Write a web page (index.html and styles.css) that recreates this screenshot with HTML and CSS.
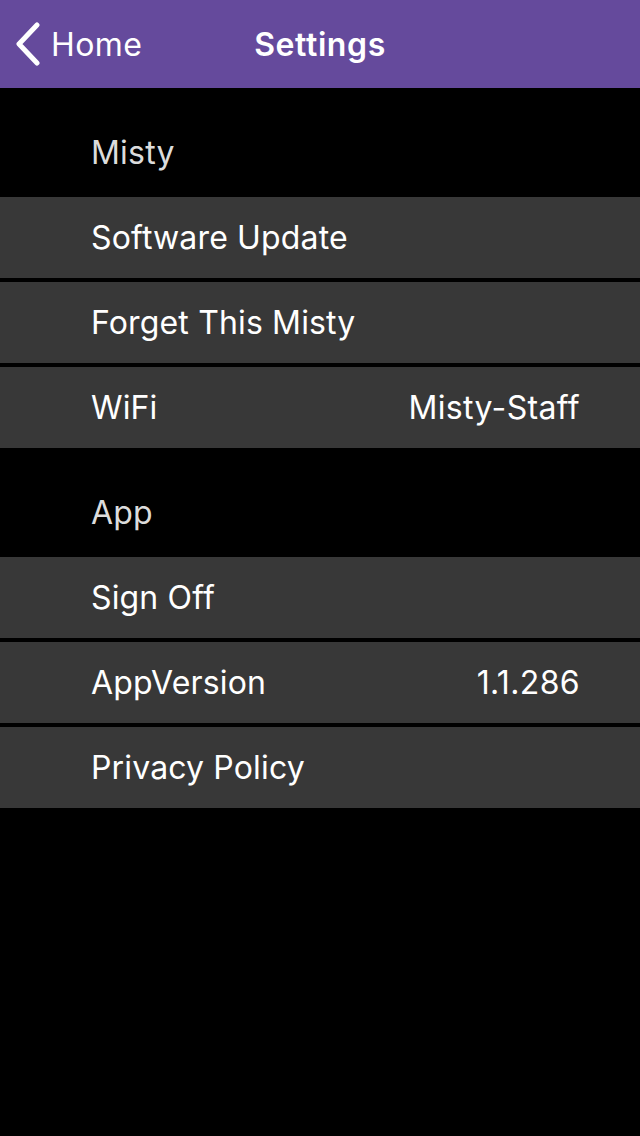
FILE: index.html
```html
<!DOCTYPE html>
<html>
<head>
<meta charset="utf-8">
<link rel="stylesheet" href="styles.css">
</head>
<body>
<header class="navbar">
  <div class="back">
    <svg class="chevron" width="28" height="44" viewBox="0 0 28 44"><path d="M24 3 L6 22 L24 41" fill="none" stroke="#fff" stroke-width="5" stroke-linecap="round" stroke-linejoin="round"/></svg>
    <span class="back-label">Home</span>
  </div>
  <div class="title">Settings</div>
</header>
<main class="content">
  <div class="section-label">Misty</div>
  <div class="group">
    <div class="row"><span class="row-label">Software Update</span></div>
    <div class="row"><span class="row-label">Forget This Misty</span></div>
    <div class="row"><span class="row-label">WiFi</span><span class="row-value">Misty-Staff</span></div>
  </div>
  <div class="section-label">App</div>
  <div class="group">
    <div class="row"><span class="row-label">Sign Off</span></div>
    <div class="row"><span class="row-label">AppVersion</span><span class="row-value">1.1.286</span></div>
    <div class="row"><span class="row-label">Privacy Policy</span></div>
  </div>
</main>
</body>
</html>
```
FILE: styles.css
```css
* { box-sizing: border-box; }
html, body { margin: 0; padding: 0; background: #000; }
body {
  width: 640px;
  height: 1136px;
  font-family: Inter, "Noto Sans", sans-serif;
  color: #fff;
  overflow: hidden;
}
.navbar {
  height: 88px;
  background: #654a9c;
  display: flex;
  align-items: center;
  position: relative;
}
.back {
  display: flex;
  align-items: center;
  padding-left: 13px;
  gap: 10px;
}
.chevron { display: block; }
.back-label {
  font-size: 32px;
  font-weight: 400;
  letter-spacing: 0.4px;
}
.title {
  position: absolute;
  left: 0;
  right: 0;
  text-align: center;
  font-size: 32px;
  font-weight: 600;
  letter-spacing: 0.6px;
  pointer-events: none;
}
.content { display: flex; flex-direction: column; }
.section-label {
  height: 109px;
  padding-left: 91px;
  display: flex;
  align-items: center;
  padding-top: 20px;
  font-size: 32px;
  letter-spacing: 0.2px;
  color: #dcdcdc;
}
.group {
  display: flex;
  flex-direction: column;
  gap: 4px;
}
.row {
  height: 81px;
  background: #383838;
  display: flex;
  align-items: center;
  justify-content: space-between;
  padding: 0 60px 0 91px;
  font-size: 32px;
  letter-spacing: 0.15px;
}
.row-value { color: #fff; letter-spacing: 0.35px; }
```
